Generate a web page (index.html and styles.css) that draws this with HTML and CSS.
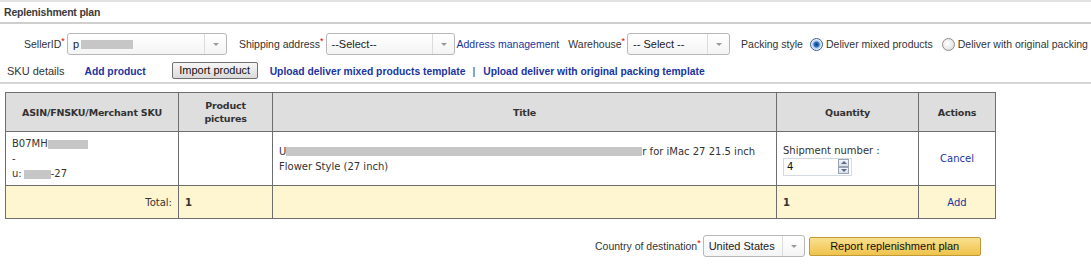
FILE: index.html
```html
<!DOCTYPE html>
<html lang="en">
<head>
  <meta charset="UTF-8" />
  <title>Replenishment plan</title>
  <link rel="stylesheet" href="styles.css">
</head>
<body>
  <div class="panel-title">Replenishment plan</div>

  <div class="filter-row">
    <span class="label lbl-seller">SellerID<i class="req">*</i></span>
    <div class="select sel-seller"><span class="val">p<b class="blot blot-seller"></b></span><span class="arrow"></span></div>
    <span class="label lbl-ship">Shipping address<i class="req">*</i></span>
    <div class="select sel-ship"><span class="val">--Select--</span><span class="arrow"></span></div>
    <a class="link addr-link" href="#">Address management</a>
    <span class="label lbl-wh">Warehouse<i class="req">*</i></span>
    <div class="select sel-wh"><span class="val">-- Select --</span><span class="arrow"></span></div>
    <span class="label lbl-pack">Packing style</span>
    <span class="radio checked"></span><span class="radio-text">Deliver mixed products</span>
    <span class="radio"></span><span class="radio-text">Deliver with original packing</span>
  </div>

  <div class="sku-row">
    <span class="sku-title">SKU details</span>
    <a class="link bold add-link" href="#">Add product</a>
    <button class="btn-import">Import product</button>
    <a class="link bold" href="#">Upload deliver mixed products template</a>
    <span class="sep">|</span>
    <a class="link bold" href="#">Upload deliver with original packing template</a>
  </div>

  <table class="sku-table">
    <colgroup>
      <col style="width: 173px">
      <col style="width: 94px">
      <col style="width: 504px">
      <col style="width: 142px">
      <col style="width: 77px">
    </colgroup>
    <thead>
      <tr>
        <th>ASIN/FNSKU/Merchant SKU</th>
        <th>Product<br>pictures</th>
        <th>Title</th>
        <th>Quantity</th>
        <th>Actions</th>
      </tr>
    </thead>
    <tbody>
      <tr class="item-row">
        <td>B07MH<b class="blot blot-asin"></b><br>-<br>u:<b class="blot blot-msku"></b>-27</td>
        <td></td>
        <td>U<b class="blot blot-title"></b>r for iMac 27 21.5 inch<br>Flower Style (27 inch)</td>
        <td>
          <div class="qty-label">Shipment number :</div>
          <div class="num-input"><span>4</span><span class="spin"><i class="up"></i><i class="down"></i></span></div>
        </td>
        <td class="center"><a class="link" href="#">Cancel</a></td>
      </tr>
      <tr class="total-row">
        <td class="right">Total:</td>
        <td class="bold">1</td>
        <td></td>
        <td class="bold">1</td>
        <td class="center"><a class="link" href="#">Add</a></td>
      </tr>
    </tbody>
  </table>

  <div class="submit-row">
    <span class="label">Country of destination<i class="req">*</i></span>
    <div class="select sel-country"><span class="val">United States</span><span class="arrow"></span></div>
    <button class="btn-report">Report replenishment plan</button>
  </div>
</body>
</html>
```

FILE: styles.css
```css
body {
  margin: 0;
  font-family: 'Liberation Sans', Arial, sans-serif;
  font-size: 11px;
  color: #333;
  width: 1091px;
  overflow: hidden;
}
.panel-title {
  border-top: 2px solid #e2e2e2;
  border-bottom: 2px solid #cfcfcf;
  height: 20px;
  line-height: 20px;
  padding-left: 4px;
  font-weight: bold;
  font-size: 10.5px;
  color: #3a3a3a;
  letter-spacing: -0.2px;
}
.filter-row {
  display: flex;
  align-items: center;
  height: 22px;
  margin-top: 9px;
  white-space: nowrap;
  font-size: 10.5px;
}
.filter-row > * { flex-shrink: 0; }
.label {
  color: #333;
}
.req {
  color: #e00000;
  font-style: normal;
  font-size: 9px;
  vertical-align: top;
  position: relative;
  top: -2px;
}
.lbl-seller { margin-left: 24px; margin-right: 2px; }
.lbl-ship { margin-left: 12px; margin-right: 2px; }
.lbl-wh { margin-left: 9px; margin-right: 2px; }
.lbl-pack { margin-left: 11px; margin-right: 7px; }
.addr-link { margin-left: 2px; }
.select {
  display: flex;
  align-items: center;
  height: 20px;
  border: 1px solid #b7b7b7;
  border-radius: 3px;
  background: linear-gradient(#ffffff, #f4f4f4);
  color: #222;
  flex-shrink: 0;
  font-size: 11px;
}
.select .val {
  flex: 1;
  padding-left: 5px;
  overflow: hidden;
  position: relative;
}
.select .arrow {
  width: 21px;
  height: 20px;
  border-left: 1px solid #dcdcdc;
  position: relative;
}
.select .arrow::after {
  content: "";
  position: absolute;
  left: 8px;
  top: 9px;
  border-left: 3px solid transparent;
  border-right: 3px solid transparent;
  border-top: 3px solid #999;
}
.sel-seller { width: 158px; }
.sel-ship { width: 127px; }
.sel-wh { width: 101px; }
.sel-country { width: 100px; }
.blot {
  display: inline-block;
  background: #c6c6c6;
  height: 9px;
  vertical-align: middle;
}
.blot-seller { width: 52px; margin-left: 2px; position: relative; top: -1px; }
.blot-asin { width: 40px; }
.blot-msku { width: 27px; margin-left: 2px; }
.blot-title { width: 356px; }
.radio {
  display: inline-block;
  width: 11px;
  height: 11px;
  border: 1px solid #8c8c8c;
  border-radius: 50%;
  background: radial-gradient(circle at 40% 40%, #ffffff, #d8d8d8);
  margin-right: 3px;
}
.radio.checked {
  border-color: #3b5d87;
  background: radial-gradient(circle at 50% 50%, #0b3c78 0, #2d74c5 2.5px, #9ec4ea 3.5px, #e9f0f7 5px);
}
.radio-text + .radio { margin-left: 9px; }
.link {
  color: #1a35a0;
  text-decoration: none;
}
.bold { font-weight: bold; }
.sku-row .bold { font-size: 10.3px; }
.sku-row {
  display: flex;
  align-items: center;
  height: 18px;
  margin-top: 7px;
  padding-left: 7px;
  padding-bottom: 2px;
  border-bottom: 2px solid #d6d6d6;
  white-space: nowrap;
}
.sku-title { color: #333; margin-right: 20px; }
.add-link { margin-right: 26px; }
.btn-import {
  font-family: inherit;
  font-size: 11px;
  color: #111;
  height: 17px;
  width: 86px;
  padding: 0;
  border: 1px solid #707070;
  border-radius: 2px;
  background: linear-gradient(#f6f6f6, #dadada);
  margin-right: 12px;
  position: relative;
  top: -1px;
}
.sep { margin: 0 8px 0 7px; color: #333; }
.sku-table {
  margin: 8px 0 0 5px;
  border-collapse: collapse;
  table-layout: fixed;
  width: 990px;
  font-family: 'DejaVu Sans', Verdana, sans-serif;
  font-size: 10px;
  color: #333;
}
.sku-table th,
.sku-table td {
  border: 1px solid #6e6e6e;
  padding: 0 6px;
  line-height: 15px;
}
.sku-table th {
  background: #dedede;
  height: 38px;
  font-weight: bold;
  font-size: 9.5px;
  letter-spacing: -0.2px;
  line-height: 13px;
  color: #333;
}
.item-row td {
  height: 53px;
  background: #fff;
  vertical-align: middle;
}
.total-row td {
  height: 32px;
  background: #fdf6d0;
}
.sku-table .center { text-align: center; }
.sku-table .right { text-align: right; }
.qty-label { margin-top: 1px; }
.num-input {
  display: flex;
  align-items: center;
  width: 67px;
  height: 16px;
  border: 1px solid #d3dae4;
  color: #111;
}
.num-input span:first-child { flex: 1; padding-left: 3px; }
.spin {
  display: flex;
  flex-direction: column;
  width: 11px;
  height: 15px;
  margin-right: 2px;
}
.spin i {
  flex: 1;
  border: 1px solid #9aa4b4;
  background: linear-gradient(#f3f5f9, #d8dee8);
  position: relative;
}
.spin i::after {
  content: "";
  position: absolute;
  left: 2px;
  top: 1px;
  border-left: 3px solid transparent;
  border-right: 3px solid transparent;
}
.spin .up::after { border-bottom: 3px solid #5b6b8c; }
.spin .down::after { border-top: 3px solid #5b6b8c; }
.submit-row {
  display: flex;
  align-items: center;
  height: 22px;
  margin-top: 16px;
  padding-left: 595px;
  white-space: nowrap;
}
.submit-row .label { margin-right: 2px; font-size: 10.5px; }
.btn-report {
  font-family: inherit;
  font-size: 11px;
  color: #111;
  width: 172px;
  height: 19px;
  padding: 0;
  margin-left: 4px;
  border: 1px solid #c19a35;
  border-radius: 2px;
  background: linear-gradient(#f9e08f, #efc24c);
}
```
